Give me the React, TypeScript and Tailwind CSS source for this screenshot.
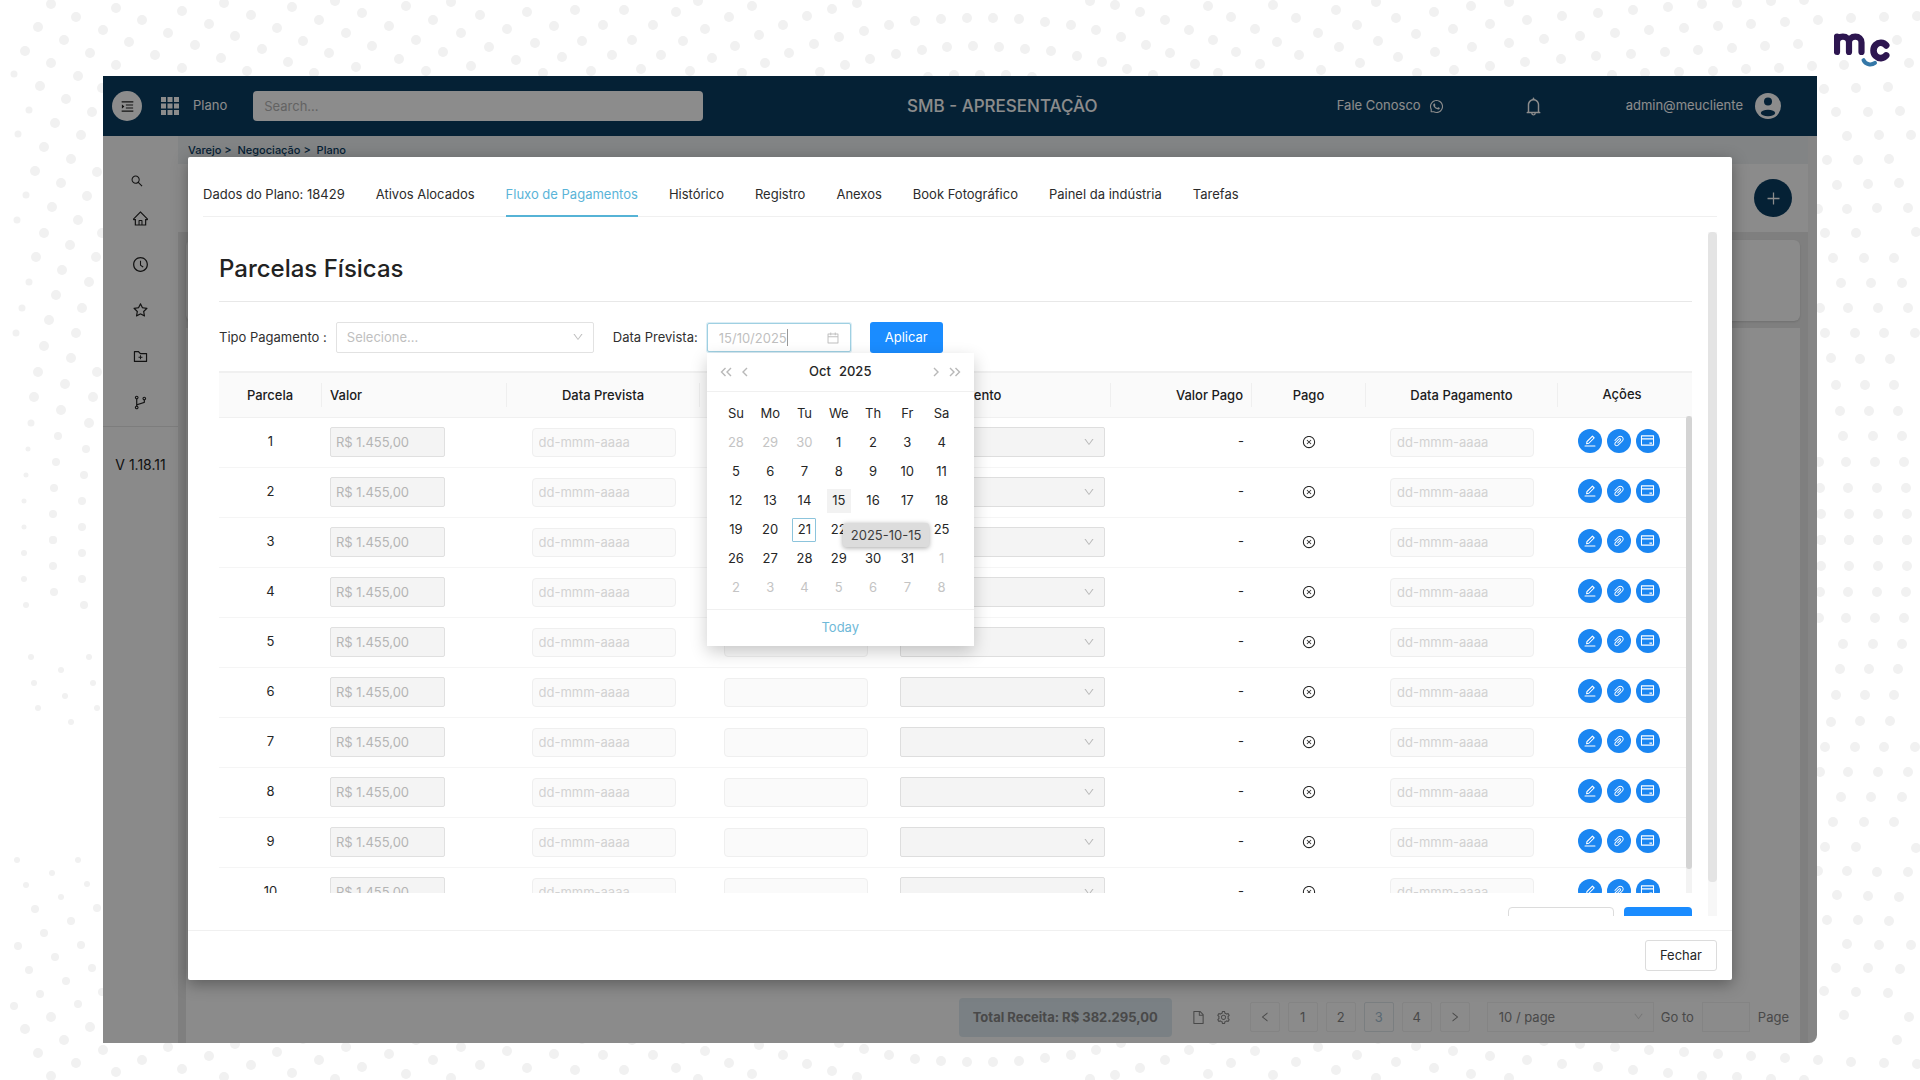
import React from "react";
import {
  AiOutlineBell,
  AiOutlineBranches,
  AiOutlineCalendar,
  AiOutlineClockCircle,
  AiOutlineCloseCircle,
  AiOutlineCreditCard,
  AiOutlineDown,
  AiOutlineEdit,
  AiOutlineFile,
  AiOutlineFolderAdd,
  AiOutlineHome,
  AiOutlineLeft,
  AiOutlineMenuUnfold,
  AiOutlinePaperClip,
  AiOutlinePlus,
  AiOutlineRight,
  AiOutlineSearch,
  AiOutlineSetting,
  AiOutlineStar,
  AiOutlineWhatsApp,
} from "react-icons/ai";

/* ---------- decorative dotted backdrop ---------- */

const topLeftDots =
  "51,4 76,17 38,27 116,8 142,20 103,30 64,40 25,51 129,42 168,33 182,11 90,53 51,63 116,65 155,55 195,45 209,24 224,3 182,68 221,58 235,36 251,15 247,71 262,49 277,28 292,7 288,62 303,41 319,20 335,1 314,73 329,53 346,33 362,13 356,67 372,46 389,26 406,6 399,59 416,40 433,20 451,2 426,71 443,52 461,33 480,15 471,66 489,47 507,29 527,12 516,60 535,43 554,26 575,10 543,73 562,57 582,41 603,25 624,10 591,71 612,55 632,40";
const leftDots =
  "14,74 78,76 40,86 102,88 66,99 29,110 92,112 55,123 18,134 81,135 44,147 71,159 35,171 97,172 61,183 26,195 87,196 52,207 17,220 78,220 44,233 102,233 70,245 36,257 96,257 62,270 29,282 89,282 56,295 22,308 82,308 49,320 16,333 76,333 44,346 71,358 38,372 97,372 65,384 34,397 93,397 61,410 31,423 89,423 58,436 28,449 86,449 56,462 26,475 84,475 54,488 24,501 82,501 53,514 24,527 82,527 53,540";
const topMidDots =
  "698,1 676,12 653,25 752,6 729,17 705,29 683,41 661,55 641,69 857,3 832,9 807,16 783,25 759,35 735,46 712,58 690,71 915,21 889,25 864,31 839,37 814,44 789,53 765,63 742,73 941,19 967,18 993,18 1019,19 1045,22 1071,25 1096,30 1121,37 1146,45 1170,53 1195,64 1218,73 1090,1 1115,5 1140,12 1165,20 1189,30 1213,40 1236,52 1260,64 1208,6 1231,17 1255,29 1277,42 1273,5 820,72 845,65 870,59 896,54 922,50 947,47 973,46 999,47 1025,49 1051,51 1077,56 1102,62 1127,69 1153,75 928,77 954,75 980,75 1006,75 1032,77";
const topRightDots =
  "1376,2 1336,10 1296,18 1509,2 1471,6 1434,12 1396,18 1357,25 1318,33 1771,1 1737,3 1702,4 1668,7 1633,10 1598,13 1562,16 1527,20 1490,24 1453,29 1416,34 1378,41 1339,47 1299,55 1804,0 1917,16 1884,17 1851,18 1818,20 1785,22 1751,24 1718,26 1684,28 1649,30 1615,33 1580,36 1544,39 1509,43 1472,47 1435,52 1398,57 1360,63 1321,70 1897,40 1798,44 1765,46 1732,48 1698,50 1665,52 1631,54 1596,56 1561,59 1525,62 1490,66 1454,70 1417,73 1909,63 1844,65 1812,66 1779,68 1746,69 1713,71 1679,72 1645,73 1612,75";
const rightDots =
  "1888,87 1856,88 1824,89 1900,111 1868,112 1836,112 1911,135 1879,135 1847,136 1889,159 1858,160 1827,160 1899,183 1868,184 1837,185 1908,208 1877,208 1847,209 1818,209 1916,232 1856,233 1825,233 1894,258 1864,258 1833,258 1902,283 1871,283 1841,283 1908,308 1878,308 1848,308 1820,308 1915,333 1884,333 1855,333 1825,333 1890,359 1860,359 1831,358 1894,385 1865,385 1836,385 1898,411 1869,411 1840,411 1902,436 1873,436 1843,436 1904,462 1875,462 1846,462 1819,462 1906,488 1877,488 1848,488 1820,488 1907,514 1878,514 1849,514 1821,514 1907,540 1878,540 1849,540 1821,540";

const parse = (s: string) => s.split(" ").map((p) => p.split(",").map(Number));
const leftSet = parse(leftDots);
const otherSet = [topLeftDots, topMidDots, topRightDots, rightDots].flatMap(parse);

function Backdrop() {
  const dots: number[][] = [];
  for (const [x, y] of otherSet) {
    dots.push([x, y, 5], [x, 1080 - y, 5]);
  }
  for (const [x, y] of leftSet) {
    const edge = x < 32 ? 3 : 0;
    dots.push([x, y, Math.max(2, (y > 430 ? 4 : 5) - edge / 2)]);
    const m = 1080 - y;
    if (m < 610) dots.push([x, m, 4 - edge / 3]);
    else if (m > 650 && m < 730) dots.push([x, m, 3]);
    else if (m > 850) dots.push([x, m, m < 900 ? 3 : 4]);
  }
  return (
    <svg
      aria-hidden="true"
      viewBox="0 0 1920 1080"
      preserveAspectRatio="xMidYMid slice"
      className="absolute inset-0 h-full w-full"
    >
      <g fill="#f1f1f1">
        {dots.map(([x, y, r], i) => (
          <circle key={i} cx={x} cy={y} r={r} />
        ))}
      </g>
    </svg>
  );
}

function Logo() {
  return (
    <svg
      aria-label="mc"
      role="img"
      viewBox="0 0 58 36"
      className="absolute top-8 right-7 h-9 w-[58px]"
      fill="none"
      strokeLinecap="round"
      strokeLinejoin="round"
      stroke="#2d1650"
    >
      <path d="M3 4.500v15.500M3 10.500c0-3.700 2.300-5.800 5.900-5.800s6.100 2.100 6.100 5.800v9.500M15 10.500c0-3.700 2.600-5.800 6.300-5.800s6.200 2.100 6.200 5.800v9.500" strokeWidth="6.200" />
      <path d="M52.200 13.400a7.200 7.700 0 1 0 0 10" strokeWidth="6.600" />
      <path d="M29.500 28.200c2.200 4.600 7.800 5.300 11.500 2.700" stroke="#3578a8" strokeWidth="4" />
    </svg>
  );
}

/* ---------- application shell ---------- */

function TopBar() {
  return (
    <header className="grid h-[60px] shrink-0 grid-cols-[19fr_auto_17fr] items-center bg-[#0a3d62] text-[13px] text-white">
      <div className="flex items-center pl-[9px]">
        <button aria-label="Abrir menu" className="flex h-[30px] w-[30px] items-center justify-center rounded-full bg-white text-[#222]">
          <AiOutlineMenuUnfold size={15} />
        </button>
        <svg viewBox="0 0 18 18" className="ml-[19px] h-[18px] w-[18px]" fill="currentColor" aria-hidden="true">
          {[0, 6.5, 13].map((y) => [0, 6.5, 13].map((x) => <rect key={`${x}-${y}`} x={x} y={y} width="5" height="5" />))}
        </svg>
        <span className="ml-[14px]">Plano</span>
        <input
          aria-label="Search"
          placeholder="Search..."
          className="ml-[26px] h-[30px] w-[450px] min-w-0 rounded-[4px] bg-white px-[11px] placeholder:text-[#b5b5b5]"
        />
      </div>
      <h1 className="pt-[2px] text-[17px] font-medium">SMB - APRESENTAÇÃO</h1>
      <div className="flex items-center justify-end pr-[36px]">
        <a href="#contato" className="flex items-center gap-[8px]">
          Fale Conosco <AiOutlineWhatsApp size={15} />
        </a>
        <button aria-label="Notificações" className="ml-[79px]">
          <AiOutlineBell size={21} />
        </button>
        <a href="#perfil" className="ml-[82px] flex items-center gap-[12px]">
          admin@meucliente
          <svg viewBox="0 0 26 26" className="h-[26px] w-[26px]" aria-hidden="true">
            <circle cx="13" cy="13" r="13" fill="#fff" />
            <circle cx="13" cy="8.500" r="4" fill="#0a3d62" />
            <ellipse cx="13" cy="20" rx="7.200" ry="3.200" fill="#0a3d62" />
          </svg>
        </a>
      </div>
    </header>
  );
}

const navItems = [
  { label: "Início", Icon: AiOutlineHome },
  { label: "Histórico", Icon: AiOutlineClockCircle },
  { label: "Favoritos", Icon: AiOutlineStar },
  { label: "Nova pasta", Icon: AiOutlineFolderAdd },
  { label: "Fluxos", Icon: AiOutlineBranches },
];

function Sidebar() {
  return (
    <nav aria-label="Principal" className="flex w-[75px] shrink-0 flex-col items-center bg-[#fcfcfc] text-[#222]">
      <button aria-label="Pesquisar" className="mt-[38px] mr-[8px]">
        <AiOutlineSearch size={14} />
      </button>
      <div className="flex w-full flex-col items-center gap-[29px] border-b border-[#e4e4e4] pt-[22px] pb-[15px]">
        {navItems.map(({ label, Icon }) => (
          <button key={label} aria-label={label}>
            <Icon size={17} />
          </button>
        ))}
      </div>
      <span className="mt-[29px] text-[14px] leading-[18px]">V 1.18.11</span>
    </nav>
  );
}

function Pagination() {
  const cell = "flex h-[30px] w-[30px] items-center justify-center rounded-[2px] border border-[#f0f0f0]";
  return (
    <footer className="flex items-center justify-end pr-[19px] text-[13px] text-[#858585]">
      <strong className="rounded-[4px] bg-[#dfeaf1] px-[14px] py-[10px] font-bold">
        Total Receita: R$ 382.295,00
      </strong>
      <button aria-label="Exportar" className="ml-[19px]">
        <AiOutlineFile size={15} />
      </button>
      <button aria-label="Configurar" className="ml-[10px]">
        <AiOutlineSetting size={15} />
      </button>
      <div className="ml-[19px] flex gap-[8px]">
        <button aria-label="Página anterior" className={cell}>
          <AiOutlineLeft size={12} />
        </button>
        <button className={cell}>1</button>
        <button className={cell}>2</button>
        <button className="flex h-[30px] w-[30px] items-center justify-center rounded-[2px] border border-[#dfe5ea] text-[#a5bfd2]">3</button>
        <button className={cell}>4</button>
        <button aria-label="Próxima página" className={cell}>
          <AiOutlineRight size={12} />
        </button>
      </div>
      <div className="relative ml-[17px]">
        <select aria-label="Itens por página" className="h-[30px] w-[167px] appearance-none border border-[#f0f0f0] px-[11px]">
          <option>10 / page</option>
        </select>
        <AiOutlineDown size={11} className="absolute top-[9px] right-[10px] text-[#d8d8d8]" />
      </div>
      <label className="ml-[7px] flex items-center gap-[8px]">
        Go to
        <input className="h-[30px] w-[48px] border border-[#f0f0f0]" />
      </label>
      <span className="ml-[8px]">Page</span>
    </footer>
  );
}

function Workspace() {
  return (
    <div className="flex min-w-0 flex-1">
      <div className="flex min-w-0 flex-1 flex-col bg-[#e8e8e8]">
        <p className="h-[28px] shrink-0 bg-[#edf0f3] pl-[10px] text-[11px] leading-[28px] font-medium text-[#0a3d62]">
          Varejo &gt; &nbsp;Negociação &gt; &nbsp;Plano
        </p>
        <div className="flex h-[68px] shrink-0 items-center justify-end bg-[#fdfdfd] pr-[16px]">
          <button aria-label="Adicionar" className="flex h-[38px] w-[38px] items-center justify-center rounded-full bg-[#0a3d62] text-white">
            <AiOutlinePlus size={17} />
          </button>
        </div>
        <div className="mx-[8px] mt-[8px] h-[81px] shrink-0 rounded-[6px] bg-[#fdfdfd] shadow" />
        <div className="mx-[8px] mt-[7px] flex flex-1 flex-col justify-end bg-[#fdfdfd] pb-[6px]">
          <div className="-mr-[8px]">
            <Pagination />
          </div>
        </div>
      </div>
      <div className="w-[9px] shrink-0 bg-[#f3f3f3]" />
    </div>
  );
}

/* ---------- calendar ---------- */

const weekDays = ["Su", "Mo", "Tu", "We", "Th", "Fr", "Sa"];
const days = Array.from({ length: 42 }, (_, i) => {
  const n = i - 2;
  if (n < 1) return { day: n + 30, off: true };
  if (n > 31) return { day: n - 31, off: true };
  return { day: n, off: false };
});

function dayClass(day: number, off: boolean) {
  if (off) return "h-6 w-6 text-[#c4c4c4]";
  if (day === 15) return "h-6 w-6 bg-[#f2f2f2]";
  if (day === 21) return "h-6 w-6 rounded-[1px] border border-[#8cc4dc]";
  return "h-6 w-6";
}

function Chevrons({ double, flip }: { double?: boolean; flip?: boolean }) {
  return (
    <svg
      viewBox="0 0 12 10"
      className={flip ? "h-[10px] w-[12px] rotate-180" : "h-[10px] w-[12px]"}
      fill="none"
      stroke="#b8b8b8"
      strokeWidth="1.400"
      aria-hidden="true"
    >
      <path d={double ? "M5.500 1l-4 4 4 4M11 1L7 5l4 4" : "M8 1L4 5l4 4"} />
    </svg>
  );
}

function Calendar() {
  return (
    <div className="absolute top-[30px] left-0 z-10 w-[267px] bg-white text-[13px] text-[#262626] shadow-[0_6px_16px_rgba(0,0,0,0.2)]">
      <div className="flex h-[39px] items-center border-b border-[#f0f0f0] px-[13px]">
        <button type="button" aria-label="Ano anterior">
          <Chevrons double />
        </button>
        <button type="button" aria-label="Mês anterior" className="ml-[7px]">
          <Chevrons />
        </button>
        <div className="flex flex-1 justify-center gap-[8px] font-medium">
          <button type="button">Oct</button>
          <button type="button">2025</button>
        </div>
        <button type="button" aria-label="Próximo mês" className="mr-[7px]">
          <Chevrons flip />
        </button>
        <button type="button" aria-label="Próximo ano">
          <Chevrons double flip />
        </button>
      </div>
      <div className="relative py-[7px] pr-[15px] pl-[12px]">
        <div className="grid grid-cols-7 text-center">
          {weekDays.map((d) => (
            <span key={d} className="leading-[29px]">
              {d}
            </span>
          ))}
          {days.map(({ day, off }, i) => (
            <div key={i} className="flex h-[29px] items-center justify-center">
              <button type="button" className={dayClass(day, off)}>
                {day}
              </button>
            </div>
          ))}
        </div>
        <div
          role="tooltip"
          className="absolute top-[131px] left-[136px] rounded-[3px] bg-[#dcdcdc] px-[8px] leading-[24px] whitespace-nowrap text-[#3c3c3c] shadow-[0_1px_5px_rgba(0,0,0,0.35)]"
        >
          2025-10-15
        </div>
      </div>
      <div className="flex h-[37px] items-center justify-center border-t border-[#f0f0f0]">
        <button type="button" className="text-[#6fb9d8]">
          Today
        </button>
      </div>
    </div>
  );
}

/* ---------- modal ---------- */

const tabs = [
  "Dados do Plano: 18429",
  "Ativos Alocados",
  "Fluxo de Pagamentos",
  "Histórico",
  "Registro",
  "Anexos",
  "Book Fotográfico",
  "Painel da indústria",
  "Tarefas",
];

const rows = [1, 2, 3, 4, 5, 6, 7, 8, 9, 10];
const dateInput =
  "block mx-auto h-[29px] w-[144px] rounded-[4px] border border-[#efefef] bg-[#fafafa] px-[6px] placeholder:text-[#d2d2d2]";
const roundButton = "flex h-6 w-6 items-center justify-center rounded-full bg-[#1a86f2] text-white";

function HeadCell({ children, className = "" }: { children: React.ReactNode; className?: string }) {
  return (
    <th scope="col" className="p-0 font-medium">
      <div className={`border-r border-[#efefef] leading-[24px] ${className}`}>{children}</div>
    </th>
  );
}

function InstallmentsTable() {
  return (
    <div className="relative mt-[18px] h-[522px] overflow-hidden">
      <table className="w-full table-fixed border-collapse text-[13px] text-[#262626]">
        <colgroup>
          <col className="w-[103px]" />
          <col className="w-[185px]" />
          <col className="w-[193px]" />
          <col className="w-[192px]" />
          <col className="w-[219px]" />
          <col className="w-[141px]" />
          <col className="w-[114px]" />
          <col className="w-[192px]" />
          <col className="w-[134px]" />
        </colgroup>
        <thead className="bg-[#fafafa] text-[#1c1c1c]">
          <tr className="h-[45px] border-t-2 border-b border-[#f0f0f0]">
            <HeadCell>Parcela</HeadCell>
            <HeadCell className="pl-[8px] text-left">Valor</HeadCell>
            <HeadCell>Data Prevista</HeadCell>
            <HeadCell>Data Cobrança</HeadCell>
            <HeadCell className="pl-[8px] text-left">Tipo Pagamento</HeadCell>
            <HeadCell className="pr-[8px] text-right">Valor Pago</HeadCell>
            <HeadCell>Pago</HeadCell>
            <HeadCell>Data Pagamento</HeadCell>
            <th scope="col" className="py-0 pr-[6px] pl-0 font-medium">
              Ações
            </th>
          </tr>
        </thead>
        <tbody>
          {rows.map((n) => (
            <tr key={n} className="h-[50px] border-b border-[#f5f5f5]">
              <td className="p-0 text-center">{n}</td>
              <td className="py-0 pr-0 pl-[8px]">
                <input
                  disabled
                  aria-label={`Valor da parcela ${n}`}
                  defaultValue="R$ 1.455,00"
                  className="block h-[30px] w-[115px] rounded-[2px] border border-[#e0e0e0] bg-[#f4f4f4] px-[5px] text-[#b4b4b4]"
                />
              </td>
              <td className="p-0">
                <input disabled aria-label={`Data prevista da parcela ${n}`} placeholder="dd-mmm-aaaa" className={dateInput} />
              </td>
              <td className="p-0">
                <input disabled aria-label={`Data de cobrança da parcela ${n}`} className={dateInput} />
              </td>
              <td className="py-0 pr-[6px] pl-[8px]">
                <div className="relative">
                  <select
                    disabled
                    aria-label={`Tipo de pagamento da parcela ${n}`}
                    className="block h-[30px] w-full appearance-none rounded-[2px] border border-[#dedede] bg-[#f4f4f4] opacity-100"
                  />
                  <AiOutlineDown size={12} className="absolute top-[9px] right-[10px] text-[#b9b9b9]" />
                </div>
              </td>
              <td className="py-0 pr-[8px] pl-0 text-right">-</td>
              <td className="p-0">
                <AiOutlineCloseCircle size={14} className="mx-auto" />
              </td>
              <td className="p-0">
                <input disabled aria-label={`Data de pagamento da parcela ${n}`} placeholder="dd-mmm-aaaa" className={dateInput} />
              </td>
              <td className="pt-0 pr-[13px] pb-[3px] pl-0">
                <div className="flex justify-center gap-[5px]">
                  <button type="button" aria-label={`Editar parcela ${n}`} className={roundButton}>
                    <AiOutlineEdit size={14} />
                  </button>
                  <button type="button" aria-label={`Anexar à parcela ${n}`} className={roundButton}>
                    <AiOutlinePaperClip size={14} />
                  </button>
                  <button type="button" aria-label={`Pagar parcela ${n}`} className={roundButton}>
                    <AiOutlineCreditCard size={15} />
                  </button>
                </div>
              </td>
            </tr>
          ))}
        </tbody>
      </table>
      <div aria-hidden="true" className="absolute top-[45px] right-0 bottom-0 w-[6px] bg-[#f3f3f3]">
        <div className="h-[95%] rounded-[3px] bg-[#d4d4d4]" />
      </div>
    </div>
  );
}

function Filters() {
  return (
    <form className="mt-[20px] flex items-center text-[13px] text-[#303030]" onSubmit={(e) => e.preventDefault()}>
      <label htmlFor="tipo">Tipo Pagamento :</label>
      <div className="relative ml-[9px]">
        <select
          id="tipo"
          className="block h-[31px] w-[258px] appearance-none rounded-[2px] border border-[#e2e2e2] bg-white px-[10px] text-[#bfbfbf]"
        >
          <option>Selecione...</option>
        </select>
        <AiOutlineDown size={12} className="absolute top-[9px] right-[10px] text-[#bfbfbf]" />
      </div>
      <label htmlFor="data" className="ml-[19px]">
        Data Prevista:
      </label>
      <div className="relative ml-[9px]">
        <input
          id="data"
          defaultValue="15/10/2025"
          className="block h-[29px] w-[144px] rounded-[2px] border border-[#9fd0e2] bg-white px-[11px] text-[#bfbfbf] shadow-[0_0_0_1px_rgba(110,185,216,0.25)]"
        />
        <span aria-hidden="true" className="absolute top-[6px] left-[80px] h-[17px] w-px bg-[#999]" />
        <AiOutlineCalendar size={14} className="absolute top-[8px] right-[11px] text-[#bfbfbf]" />
        <Calendar />
      </div>
      <button type="submit" className="ml-[19px] h-[31px] rounded-[3px] bg-[#1a8cff] px-[15px] text-white">
        Aplicar
      </button>
    </form>
  );
}

function PaymentModal() {
  return (
    <section
      role="dialog"
      aria-label="Fluxo de Pagamentos"
      className="flex w-full flex-col rounded-[2px] bg-white shadow-[0_4px_16px_rgba(0,0,0,0.35)]"
    >
      <div role="tablist" className="mx-[15px] mt-[18px] flex h-[42px] gap-[31px] border-b border-[#f0f0f0] text-[13px] text-[#2b2b2b]">
        {tabs.map((t) => (
          <button
            key={t}
            role="tab"
            aria-selected={t === "Fluxo de Pagamentos"}
            className={
              t === "Fluxo de Pagamentos"
                ? "-mb-px border-b-2 border-[#56b3d6] text-[#5ab4d8]"
                : "-mb-px border-b-2 border-transparent"
            }
          >
            {t}
          </button>
        ))}
      </div>

      <div className="mt-[15px] mr-[15px] ml-[31px] flex min-h-0 flex-1 gap-[16px] overflow-hidden">
        <div className="min-w-0 flex-1">
          <h2 className="mt-[17px] border-b border-[#e8e8e8] pb-[12px] text-[24px] leading-[40px] font-medium text-[#222]">
            Parcelas Físicas
          </h2>
          <Filters />
          <InstallmentsTable />
          <div className="mt-[14px] flex justify-end gap-[10px]">
            <button aria-label="Cancelar" className="h-[31px] w-[106px] rounded-[4px] border border-[#dcdcdc]" />
            <button aria-label="Salvar" className="h-[31px] w-[68px] rounded-[4px] bg-[#1a8cff]" />
          </div>
        </div>
        <div aria-hidden="true" className="w-[9px] shrink-0 bg-[#f7f7f7]">
          <div className="h-[95%] rounded-[4px] bg-[#e4e4e4]" />
        </div>
      </div>

      <div className="mt-[14px] flex h-[50px] items-center justify-end border-t border-[#f0f0f0] pr-[15px]">
        <button className="h-[31px] rounded-[3px] border border-[#dcdcdc] px-[14px] text-[13px] text-[#262626]">Fechar</button>
      </div>
    </section>
  );
}

export default function App() {
  return (
    <div className="relative flex h-screen min-h-[900px] flex-col overflow-hidden bg-white px-[103px] pt-[76px] pb-[37px] font-['Inter',sans-serif]">
      <Backdrop />
      <Logo />
      <main className="relative flex min-h-0 flex-1 flex-col overflow-hidden rounded-br-[8px] bg-white">
        <TopBar />
        <div className="flex min-h-0 flex-1">
          <Sidebar />
          <Workspace />
        </div>
        <div className="absolute inset-0 flex bg-black/45 px-[85px] pt-[81px] pb-[63px]">
          <PaymentModal />
        </div>
      </main>
    </div>
  );
}
